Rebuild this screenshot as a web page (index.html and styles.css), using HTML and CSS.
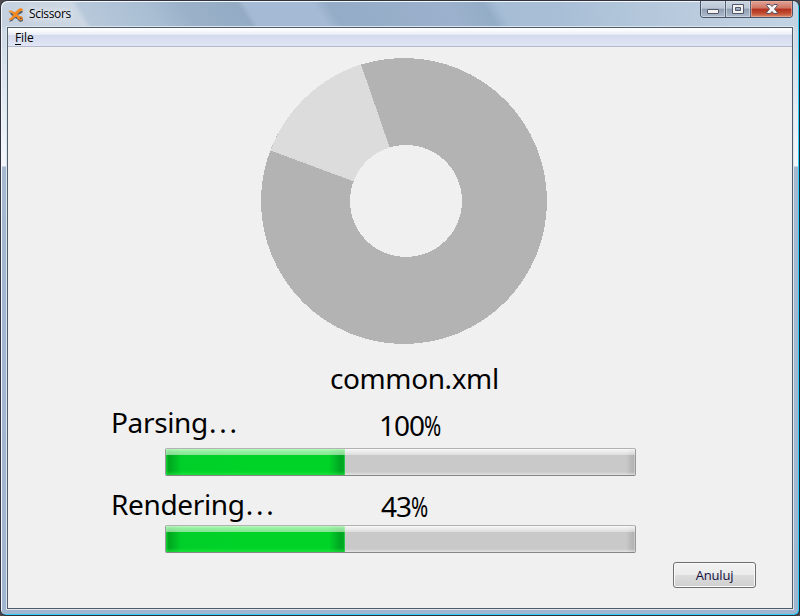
FILE: index.html
```html
<!DOCTYPE html>
<html lang="pl">
<head>
<meta charset="utf-8">
<title>Scissors</title>
<link rel="stylesheet" href="styles.css">
</head>
<body>
<div class="window">
  <header class="titlebar">
    <svg class="app-icon" width="16" height="14" viewBox="0 0 16 14">
      <path d="M1 4l5 2 6-4 3 1-1 2-4 2 1 2 4 1v3l-3 1-3-3-2-1-3 3-3 1 4-5z" fill="#56606c"/>
      <path d="M0 3l3-.5 4 1.800L10.500 1l2-1L15 1l-.5 1.800-2.500.7L9.500 6l.3 1.500 3.700.7 1.500 1.800-.6 2-2.200.4L10 11 8.500 8.800 7 9l-2.500 2.500L1 12l-.2-1 2.700-1.800L5.500 6.500 4 5z" fill="#f98a20"/>
      <path d="M11.500 9.500h2v1.500h-1.500z" fill="#5a5360"/>
    </svg>
    <span class="caption">Scissors</span>
    <div class="controls">
      <span class="ctl min"><svg width="12" height="5" viewBox="0 0 12 5"><rect x=".5" y=".5" width="11" height="4" rx=".5" fill="#f4f2ee" stroke="#50566d"/></svg></span>
      <span class="ctl max"><svg width="12" height="10" viewBox="0 0 12 10"><path d="M.5 .5h11v9H.5zM3.500 3.500v3h5v-3z" fill="#f4f2ee" fill-rule="evenodd" stroke="#50566d"/></svg></span>
      <span class="ctl close"><svg width="12" height="10" viewBox="0 0 12 10"><path d="M.8 .5h3.400L6 2.500 7.800.5h3.400v1.300L8.500 5l2.700 3.200v1.300H7.800L6 7.500 4.200 9.500H.8V8.200L3.500 5 .8 1.800z" fill="#f7f4f2" stroke="#545267"/></svg></span>
    </div>
  </header>
  <div class="client">
    <nav class="menubar"><span><u>F</u>ile</span></nav>
    <main>
      <svg class="donut" width="286" height="286" viewBox="261 58 286 286" shape-rendering="crispEdges">
        <circle cx="404" cy="201" r="143" fill="#b3b3b3"/>
        <path d="M389.500 147L361 64.500A143 143 0 0 0 270.500 150.500L354 181.500L406 201z" fill="#dcdcdc"/>
        <circle cx="406" cy="201" r="56" fill="#f0f0f0"/>
      </svg>
      <div class="filename">common.xml</div>
      <div class="row parsing"><span class="label">Parsing<span class="dots">...</span></span><span class="pct">100<span class="sign">%</span></span></div>
      <div class="bar"><div class="fill"></div></div>
      <div class="row rendering"><span class="label">Rendering<span class="dots">...</span></span><span class="pct">43<span class="sign">%</span></span></div>
      <div class="bar"><div class="fill"></div></div>
      <button class="cancel">Anuluj</button>
    </main>
  </div>
</div>
</body>
</html>
```

FILE: styles.css
```css
* { box-sizing: border-box; }
body { margin: 0; background: #4c4a4e; }
.window {
  width: 800px; height: 616px; display: flex; flex-direction: column;
  padding: 1px 5px 5px 5px;
  border: 1px solid #30333d; border-right-color: #1c2733; border-bottom-color: #303038;
  border-radius: 7px 7px 6px 6px;
  box-shadow: inset 1px 1px #f4f8fc, inset -1px -1px #2ccdf7;
  background:
    linear-gradient(90deg, #c3d4e400 70%, #c3d4e4 100%) 0 0 / 100% 26px no-repeat,
    linear-gradient(58deg, #c5d0df 0, #ccd7e3 72px, #b7c8da 78px, #a9bed3 135px, #9ab1c9 165px, #93abc4 213px, #a5bbd5 219px, #a5bbd5 277px, #94acc7 290px, #9bb1cd 390px, #94adc6 421px, #a6bdd6 433px, #adc1d6 580px, #aabed3 690px) 0 0 / 100% 26px no-repeat,
    linear-gradient(#c5d2e1 0, #eef3f9 140px, #f2f6fb 165px, #a5b8d0 166px, #a0b5d0 100%);
}
.titlebar { height: 24px; flex: none; display: flex; align-items: flex-start; }
.app-icon { margin: 6px 5px 0 2px; }
.caption {
  font: 12px/16px "Open Sans", "Noto Sans", sans-serif; letter-spacing: -.35px; color: #000; margin-top: 4px;
  text-shadow: 0 0 6px #fff, 0 0 10px #fff;
}
.controls {
  margin: -1px 1px 0 auto; display: flex; width: 93px; height: 17px;
  border: 1px solid #4b5468; border-top: 0; border-radius: 0 0 4px 4px; overflow: hidden;
}
.ctl {
  display: flex; align-items: center; justify-content: center; width: 25px;
  border-right: 1px solid #566176;
  box-shadow: inset 0 0 0 1px #dbe4ed99;
  background: linear-gradient(#cbd5e1 0, #b9c6d4 45%, #8e9db0 50%, #aebccd 100%);
}
.min { padding-top: 5px; }
.max { padding-bottom: 1px; }
.close {
  flex: 1; border-right: 0; padding-bottom: 1px;
  box-shadow: inset 0 0 0 1px #f0b3a499;
  background: linear-gradient(#e0a396 0, #ce7462 45%, #b1301d 50%, #bf4a2e 75%, #d98968 100%);
}
.client {
  flex: none; display: flex; flex-direction: column; background: #f0f0f0;
  width: 786px; height: 582px; margin: 1px 0 0 1px;
  border: 1px solid #505c69; box-shadow: 0 0 0 1px #dce6ef;
}
.menubar {
  height: 19px; flex: none; border-bottom: 1px solid #b4b9d0;
  background: linear-gradient(#fff 0, #fbfcfe 2px, #e7ebf4 7px, #d4daed 7px, #e1e6f6 18px);
  font: 12px/18px "Open Sans", "Noto Sans", sans-serif; letter-spacing: -.1px; padding: 1px 0 0 7px; color: #000;
}
.menubar u { text-underline-offset: 2px; }
main {
  flex: 1; display: flex; flex-direction: column; padding: 11px 157px 0;
  font: 28px/32px "Noto Sans", sans-serif; color: #000;
}
.donut { display: block; margin-left: 96px; flex: none; }
.filename { margin: 18px 0 0 165px; height: 34px; letter-spacing: -.4px; white-space: nowrap; }
.row { display: grid; grid-template-columns: 268px 1fr; height: 32px; margin-left: -54px; white-space: nowrap; }
.parsing { margin-top: 10px; margin-bottom: 1px; }
.rendering { margin-top: 12px; margin-bottom: 1px; }
.label { letter-spacing: -.35px; }
.dots { letter-spacing: 2.8px; margin-left: 1px; }
.pct { padding-top: 3px; letter-spacing: -1px; }
.rendering .pct { padding: 2px 0 0 2px; }
.sign { display: inline-block; transform: scaleX(.74); transform-origin: 0 50%; }
.bar {
  width: 471px; height: 28px; flex: none; margin-top: 9px; padding-right: 1px;
  border: 1px solid #999; border-top-color: #b2b2b2; border-bottom-color: #868686; border-radius: 2px;
  background:
    linear-gradient(#ffffffe0 0, #ffffffb0 2px, #ffffff60 6px, transparent 6px, transparent 23px, #ffffff80 26px),
    linear-gradient(90deg, #c9c9c9 460px, #b1b1b1 468px, #ddd 469px);
}
.rendering + .bar { margin-top: 4px; }
.fill {
  width: 179px; height: 26px;
  background:
    linear-gradient(#d6ffd6e0 0, #ceffceb8 2px, #ccebcca8 6px, transparent 6px, transparent 22px, #2dee4590 26px),
    linear-gradient(90deg, #1bd83b 0, #00a91f 2px, #00ac21 5px, #00cf29 15px, #00d328 80px, #00d328 163px, #00a722 174px, #00ac22 178px, #52e36c 179px);
}
.cancel {
  align-self: flex-end; margin: 9px -121px 0 0; width: 83px; height: 26px; padding: 0;
  border: 1px solid #707070; border-radius: 3px; box-shadow: inset 0 0 0 1px #fafafa;
  background: linear-gradient(#f3f3f3 0, #ebebeb 49%, #dddddd 50%, #cfcfcf 100%);
  font: 13px/20px "Open Sans", "Noto Sans", sans-serif; letter-spacing: -.2px; color: #101040;
}
```
